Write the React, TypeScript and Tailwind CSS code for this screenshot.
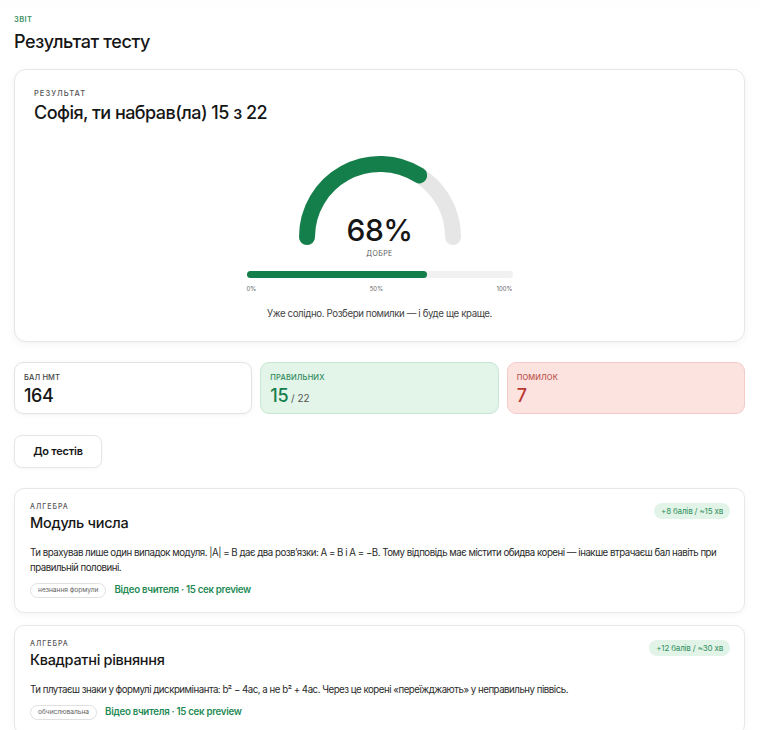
import React from "react";

const GREEN = "#157f4c";

function Gauge({ pct }: { pct: number }) {
  const cx = 90;
  const cy = 82;
  const r = 73;
  const t = Math.PI * pct;
  const ex = cx - r * Math.cos(t);
  const ey = cy - r * Math.sin(t);
  return (
    <div className="relative mx-auto w-[180px] h-[100px]">
      <svg width="180" height="100" viewBox="0 0 180 100" className="block">
        <path
          d={`M ${cx - r} ${cy} A ${r} ${r} 0 0 1 ${cx + r} ${cy}`}
          fill="none"
          stroke="#e6e6e6"
          strokeWidth="16"
          strokeLinecap="round"
        />
        <path
          d={`M ${cx - r} ${cy} A ${r} ${r} 0 0 1 ${ex.toFixed(2)} ${ey.toFixed(2)}`}
          fill="none"
          stroke={GREEN}
          strokeWidth="16"
          strokeLinecap="round"
        />
      </svg>
      <div className="absolute left-0 right-0 top-[63px] text-center text-[30px] leading-[24px] font-medium tracking-[-0.02em] text-[#161616]">
        68%
      </div>
      <div className="absolute left-0 right-0 top-[94px] text-center text-[7px] leading-[9px] tracking-[0.06em] text-[#555]">
        ДОБРЕ
      </div>
    </div>
  );
}

function Stat({
  label,
  children,
  box,
  labelCls,
}: {
  label: string;
  children: React.ReactNode;
  box: string;
  labelCls: string;
}) {
  return (
    <div className={`h-[52px] rounded-[9px] border px-[9px] pt-[10px] ${box}`}>
      <div className={`text-[7.5px] leading-[10px] font-medium tracking-[0.02em] ${labelCls}`}>{label}</div>
      <div className="mt-[2px] leading-[22px]">{children}</div>
    </div>
  );
}

function Topic({
  title,
  text,
  tag,
  badge,
}: {
  title: string;
  text: string;
  tag: string;
  badge: string;
}) {
  return (
    <div className="rounded-[10px] border border-[#e8e8e8] bg-white px-[15px] pt-[13px] pb-[14px] shadow-[0_2px_6px_rgba(0,0,0,0.04)]">
      <div className="flex items-start justify-between">
        <div>
          <div className="pt-[1px] text-[7px] leading-[8px] font-medium tracking-[0.14em] text-[#555]">АЛГЕБРА</div>
          <div className="mt-[3px] text-[14.5px] leading-[18px] font-medium tracking-[-0.02em] text-[#161616]">{title}</div>
        </div>
        <div className="mr-[-1px] mt-[1px] flex h-[16px] items-center rounded-full bg-[#e2f4e8] px-[7px] text-[8px] tracking-[-0.02em] text-[#2f8f5b]">
          {badge}
        </div>
      </div>
      <p className="mr-[-3px] mt-[13px] text-[9.7px] leading-[15px] tracking-[-0.05em] text-[#2a2a2a]">{text}</p>
      <div className="mt-[8px] flex items-center gap-[8px]">
        <span className="flex h-[15px] items-center rounded-full border border-[#e0e0e0] px-[7px] text-[6.7px] tracking-[-0.01em] text-[#666]">
          {tag}
        </span>
        <span className="text-[9.7px] font-semibold tracking-[-0.03em] text-[#1f8a55]">Відео вчителя · 15 сек preview</span>
      </div>
    </div>
  );
}

export default function App() {
  return (
    <div
      className="min-h-[730px] bg-white text-[#161616]"
      style={{ fontFamily: "Inter, 'Noto Sans', sans-serif" }}
    >
      <div className="h-px bg-white shadow-[0_1px_10px_rgba(0,0,0,0.09)]" />
      <div className="px-[14px] pr-[15px]">
        <div className="pt-[14px] text-[7.5px] leading-[10px] font-semibold tracking-[0.05em] text-[#3b8f63]">ЗВІТ</div>
        <h1 className="mt-[5px] text-[18px] leading-[24px] font-medium tracking-[-0.02em]">Результат тесту</h1>

        <div className="mt-[15px] rounded-[12px] border border-[#e6e6e6] bg-white px-[19px] pt-[19px] pb-[20px] shadow-[0_2px_8px_rgba(0,0,0,0.05)]">
          <div className="text-[7.5px] leading-[10px] font-medium tracking-[0.14em] text-[#555]">РЕЗУЛЬТАТ</div>
          <div className="mt-[2px] text-[18px] leading-[24px] font-medium tracking-[-0.03em]">Софія, ти набрав(ла) 15 з 22</div>

          <div className="mt-[30px]">
            <Gauge pct={0.68} />
          </div>

          <div className="mx-auto mt-[16px] w-[266px]">
            <div className="h-[7px] rounded-full bg-[#f1f1f1]">
              <div className="h-[7px] rounded-full" style={{ width: "68%", backgroundColor: GREEN }} />
            </div>
            <div className="mt-[6px] flex justify-between text-[6px] leading-[10px] text-[#666]">
              <span>0%</span>
              <span>50%</span>
              <span>100%</span>
            </div>
          </div>

          <div className="mt-[13px] text-center text-[9.7px] leading-[14px] tracking-[-0.04em] text-[#444]">
            Уже солідно. Розбери помилки — і буде ще краще.
          </div>
        </div>

        <div className="mt-[20px] grid grid-cols-3 gap-[8px]">
          <Stat
            label="БАЛ НМТ"
            box="border-[#e3e3e3] bg-white shadow-[0_1px_5px_rgba(0,0,0,0.05)]"
            labelCls="text-[#444]"
          >
            <span className="text-[18px] font-medium tracking-[-0.02em] text-[#161616]">164</span>
          </Stat>
          <Stat label="ПРАВИЛЬНИХ" box="border-[#c9e7d4] bg-[#e3f4e9]" labelCls="text-[#2e8a5a]">
            <span className="text-[18px] font-medium tracking-[-0.02em]" style={{ color: GREEN }}>
              15
            </span>
            <span className="text-[10px] text-[#555]"> / 22</span>
          </Stat>
          <Stat label="ПОМИЛОК" box="border-[#f4cbc7] bg-[#fde3e0]" labelCls="text-[#b9534c]">
            <span className="text-[18px] font-medium text-[#b83a31]">7</span>
          </Stat>
        </div>

        <button className="mt-[21px] flex h-[33px] w-[88px] items-center justify-center rounded-[8px] border border-[#e6e6e6] bg-white text-[11px] font-semibold tracking-[-0.02em] text-[#161616] shadow-[0_1px_4px_rgba(0,0,0,0.04)]">
          До тестів
        </button>

        <div className="mt-[20px] flex flex-col gap-[12px]">
          <Topic
            title="Модуль числа"
            text="Ти врахував лише один випадок модуля. |A| = B дає два розв’язки: A = B і A = −B. Тому відповідь має містити обидва корені — інакше втрачаєш бал навіть при правильній половині."
            tag="незнання формули"
            badge="+8 балів / ~15 хв"
          />
          <Topic
            title="Квадратні рівняння"
            text="Ти плутаєш знаки у формулі дискримінанта: b² − 4ac, а не b² + 4ac. Через це корені «переїжджають» у неправильну піввісь."
            tag="обчислювальна"
            badge="+12 балів / ~30 хв"
          />
        </div>
      </div>
    </div>
  );
}
